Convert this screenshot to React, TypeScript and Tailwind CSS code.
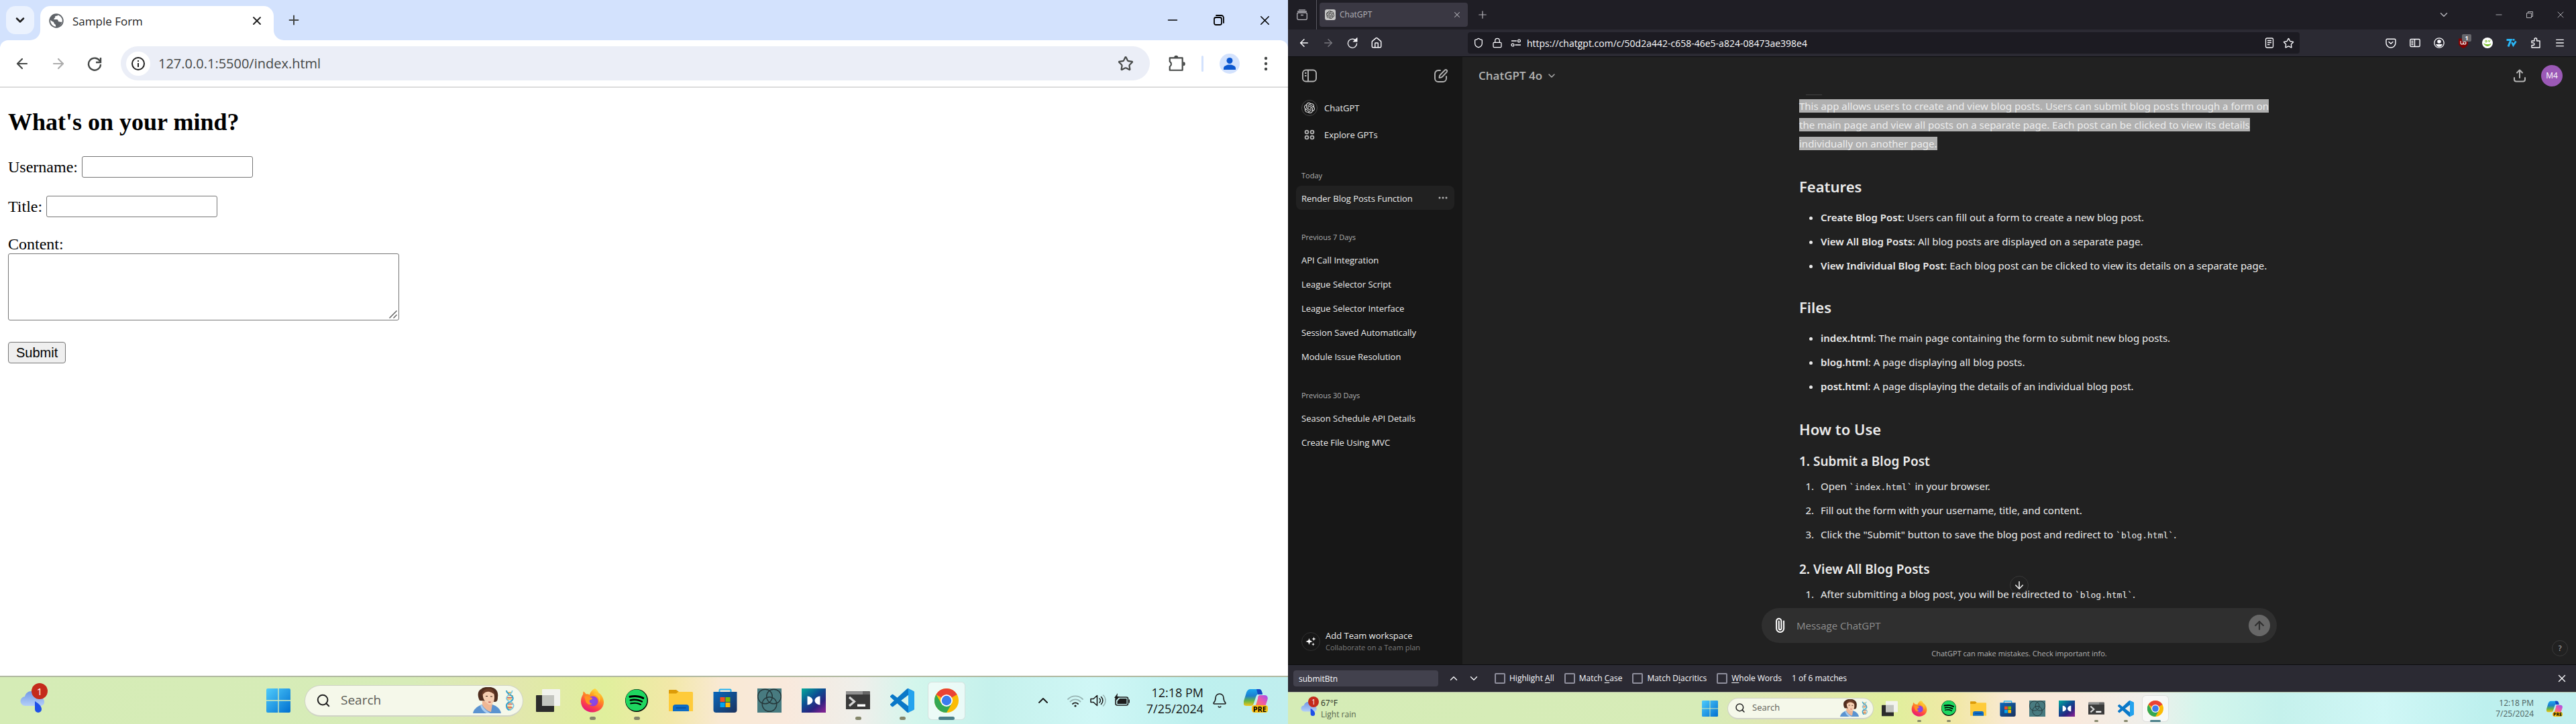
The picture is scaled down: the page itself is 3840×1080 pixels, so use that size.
import React from "react";
import { SiOpenai } from "react-icons/si";
import { FaSpotify } from "react-icons/fa";
import {
  ArrowDown,
  ArrowLeft,
  ArrowRight,
  ArrowUp,
  Bell,
  ChevronDown,
  ChevronUp,
  House,
  Lock,
  Menu,
  Minus,
  Paperclip,
  Plus,
  Search,
  Shield,
  Star,
  X,
} from "lucide-react";

type Kids = { children?: React.ReactNode };

function Btn({ label, className = "", children }: Kids & { label: string; className?: string }) {
  return (
    <button type="button" aria-label={label} className={`flex shrink-0 items-center justify-center ${className}`}>
      {children}
    </button>
  );
}

/* ---------- taskbar artwork ---------- */

function WindowsLogo({ id }: { id: string }) {
  return (
    <svg viewBox="0 0 36 36" className="size-full">
      <defs>
        <linearGradient id={`win${id}`} x1="0" y1="0" x2="1" y2="1">
          <stop offset="0" stopColor="#4fcbfb" />
          <stop offset="1" stopColor="#0070d0" />
        </linearGradient>
      </defs>
      <path
        d="M2 0h15.3v17.3H0V2a2 2 0 0 1 2-2zM18.7 0H34a2 2 0 0 1 2 2v15.3H18.7zM0 18.7h17.3V36H2a2 2 0 0 1-2-2zM18.7 18.7H36V34a2 2 0 0 1-2 2H18.7z"
        fill={`url(#win${id})`}
      />
    </svg>
  );
}

function TaskView() {
  return (
    <svg viewBox="0 0 36 36" className="size-full">
      <rect x="0" y="10" width="27" height="25" rx="1" fill="#2c2c2c" />
      <rect x="9" y="1" width="27" height="25" rx="1" fill="#f3f3f3" fillOpacity=".93" />
      <rect x="9" y="10" width="18" height="16" fill="#c3c5bf" />
    </svg>
  );
}

function Firefox({ id }: { id: string }) {
  return (
    <svg viewBox="0 0 36 36" className="size-full">
      <defs>
        <linearGradient id={`fx${id}`} x1=".8" y1="0" x2=".3" y2="1">
          <stop offset="0" stopColor="#fff04a" />
          <stop offset=".35" stopColor="#ff9a1f" />
          <stop offset=".7" stopColor="#ff4545" />
          <stop offset="1" stopColor="#e3127e" />
        </linearGradient>
        <radialGradient id={`fxp${id}`}>
          <stop offset="0" stopColor="#7a52f0" />
          <stop offset="1" stopColor="#9a3ad4" />
        </radialGradient>
      </defs>
      <path
        d="M22 0c3 2 4.500 4 5.500 6.500C31 8.500 35 14 35 20.500 35 29 27.500 35.500 18 35.500S1 28.500 1 19.500c0-5 1.500-8 3-10.500l.5-4.500c1.500.5 3 2 4 4 2-.5 4 0 5.500 1 1-4.500 4-8 8-9.500z"
        fill={`url(#fx${id})`}
      />
      <circle cx="19" cy="19" r="7.500" fill={`url(#fxp${id})`} />
      <path d="M6 12c3-1.500 6-.5 9 1.500 2 0 3 .5 3 1.500-1 1.500-3 2-4 2.500-1 3 1 5 4 5.500-4 2.500-9 0-10-4z" fill="#ff9320" />
      <path d="M20 9c6 1 9 6 8 12 3-5 2-12-3-14-2-1-4 0-5 2z" fill="#ffc22e" />
    </svg>
  );
}

function Spotify() {
  return (
    <span className="flex size-full items-center justify-center">
      <span className="flex size-[92%] rounded-full bg-black">
        <FaSpotify className="size-full text-[#1ed760]" />
      </span>
    </span>
  );
}

function Explorer() {
  return (
    <svg viewBox="0 0 36 36" className="size-full">
      <path d="M0 3a1 1 0 0 1 1-1h10l4 3-3 3H0z" fill="#dd9b08" />
      <path d="M0 7.500h11l3-2.500h20.500A1.500 1.500 0 0 1 36 6.500V34H0z" fill="#fecb3a" />
      <path d="M6 34V28a4 4 0 0 1 4-4h16a4 4 0 0 1 4 4v6z" fill="#0d6cc4" />
      <path d="M11 29h14" stroke="#084a94" strokeWidth="1.500" strokeLinecap="round" />
    </svg>
  );
}

function Store({ id }: { id: string }) {
  return (
    <svg viewBox="0 0 36 36" className="size-full">
      <defs>
        <linearGradient id={`st${id}`} x1="0" y1="0" x2="1" y2="1">
          <stop offset="0" stopColor="#0968bd" />
          <stop offset="1" stopColor="#1c315c" />
        </linearGradient>
      </defs>
      <path d="M9.500 7V2.500a1 1 0 0 1 1-1h15a1 1 0 0 1 1 1V7" fill="none" stroke="#22b2f2" strokeWidth="2" />
      <path d="M.5 5H35.500V32a4 4 0 0 1-4 4H4.500a4 4 0 0 1-4-4z" fill={`url(#st${id})`} />
      <path d="M10.500 13h7v7h-7z" fill="#f25022" />
      <path d="M18.500 13h7v7h-7z" fill="#7fba00" />
      <path d="M10.500 21h7v7h-7z" fill="#00a4ef" />
      <path d="M18.500 21h7v7h-7z" fill="#ffb900" />
    </svg>
  );
}

function Rings() {
  return (
    <svg viewBox="0 0 36 36" className="size-full">
      <path d="M0 0h36v36H0z" fill="#487b80" />
      <g fill="none" stroke="#26383b" strokeWidth="1.400">
        <circle cx="11.500" cy="12" r="10.800" />
        <circle cx="24.500" cy="12" r="10.800" />
        <circle cx="18" cy="23.500" r="10.800" />
      </g>
    </svg>
  );
}

function Wing({ id }: { id: string }) {
  return (
    <svg viewBox="0 0 36 36" className="size-full">
      <defs>
        <linearGradient id={`wg${id}`} x1="0" y1="0" x2=".8" y2="1">
          <stop offset="0" stopColor="#05ab9b" />
          <stop offset=".45" stopColor="#0c4f92" />
          <stop offset=".75" stopColor="#2c2380" />
          <stop offset="1" stopColor="#7a2390" />
        </linearGradient>
      </defs>
      <path d="M0 0h36v36H0z" fill={`url(#wg${id})`} />
      <path d="M8.500 11.500c4 0 8 3 8 6.500s-4 6.500-8 6.500zM27.500 11.500c-4 0-8 3-8 6.500s4 6.500 8 6.500z" fill="#fff" />
    </svg>
  );
}

function Terminal() {
  return (
    <svg viewBox="0 0 36 36" className="size-full">
      <path d="M0 5.500A1.500 1.500 0 0 1 1.500 4h33A1.500 1.500 0 0 1 36 5.500V31H0z" fill="#3a3a3a" />
      <path d="M0 5.500A1.500 1.500 0 0 1 1.500 4H25v5H0z" fill="#8f8f8f" />
      <path d="M25 4h9.500A1.500 1.500 0 0 1 36 5.500V9H25z" fill="#666" />
      <path d="M5 13l7.500 6.500L5 26" fill="none" stroke="#d6d6d6" strokeWidth="3.200" />
      <path d="M17 23.500h12v3.500H17z" fill="#fff" />
    </svg>
  );
}

function VsCode() {
  return (
    <svg viewBox="0 0 24 24" className="size-full">
      <path
        d="M23.150 2.587 18.210.21a1.494 1.494 0 0 0-1.705.29l-9.460 8.630-4.120-3.128a1 1 0 0 0-1.276.057L.327 7.261A1 1 0 0 0 .326 8.740L3.899 12 .326 15.260a1 1 0 0 0 .001 1.479L1.650 17.940a1 1 0 0 0 1.276.057l4.120-3.128 9.460 8.630a1.492 1.492 0 0 0 1.704.29l4.942-2.377A1.500 1.500 0 0 0 24 20.060V3.939a1.500 1.500 0 0 0-.85-1.352zm-5.146 14.861L10.826 12l7.178-5.448z"
        fill="#0a78c8"
      />
      <path d="M18 .1l5.200 2.500a1.500 1.500 0 0 1 .8 1.340V20.060a1.500 1.500 0 0 1-.8 1.300L18 23.900z" fill="#24a3ee" />
    </svg>
  );
}

function Chrome() {
  return (
    <svg viewBox="0 0 36 36" className="size-full">
      <circle cx="18" cy="18" r="18" fill="#fbbc04" />
      <path d="M18 18 2.400 9a18 18 0 0 1 31.200 0z" fill="#ea4335" />
      <path d="M10.200 22.500 2.400 9A18 18 0 0 0 18 36l7.800-13.500z" fill="#34a853" />
      <circle cx="18" cy="18" r="9" fill="#fff" />
      <circle cx="18" cy="18" r="7.200" fill="#3b7ced" />
    </svg>
  );
}

function Portrait() {
  return (
    <svg viewBox="0 0 42 39" className="h-full w-auto">
      <path d="M10 20C7 15 6 6 12 3 16-1 26-1 30 1c6 2 8 8 7 14 0 4-1 7-4 7z" fill="#4f2d1e" />
      <path d="M0 39c1-6 6-10 13-13h16c7 2 12 7 13 13z" fill="#5b93d0" />
      <path d="M14 20v7c3 5 8 9 13 10l2-12z" fill="#efb795" />
      <path d="M13 26c3 6 8 10 13 13h-6c-5-3-8-7-9-12z" fill="#a9cdf0" />
      <path d="M15 9c3-4 12-4 16 0 2 6 1 13-3 17-3 1-5 0-7-2-5-4-7-9-6-15z" fill="#f5cdb0" />
      <path d="M13 13c0-8 6-11 11-11s8 4 9 10c-3-3-8-6-12-5-3 0-5 3-8 6z" fill="#6b3d28" />
      <path d="M19 13.500h3M26 14h3" stroke="#40281d" strokeWidth="1.200" />
      <path d="M23 22c1.500 .6 2.500.6 3.500 0" stroke="#b63e3e" strokeWidth="1.200" fill="none" />
    </svg>
  );
}

function Dna() {
  return (
    <svg viewBox="0 0 14 32" className="h-full w-auto" fill="none">
      <path d="M3 4h7M4 9h8M2 14h8M3 20h9M2 25h8M4 29h7" stroke="#e8a53a" strokeWidth="1.500" />
      <path d="M4 7h5M3 12h9M4 22h9M3 27h8" stroke="#d3473c" strokeWidth="1.200" />
      <path d="M2 1c0 6 10 6 10 12S2 18 2 24s4 7 6 8" stroke="#3aa6d0" strokeWidth="2.200" />
      <path d="M11 1c0 6-9 7-9 12s11 6 11 11-5 6-7 8" stroke="#7cc9e2" strokeWidth="1.800" />
    </svg>
  );
}

function Copilot({ id }: { id: string }) {
  return (
    <svg viewBox="0 0 36 36" className="size-full">
      <defs>
        <linearGradient id={`cp${id}`} x1="0" y1="0" x2="0" y2="1">
          <stop offset="0" stopColor="#1aa5ef" />
          <stop offset=".4" stopColor="#1d7fd0" />
          <stop offset=".7" stopColor="#65b544" />
          <stop offset="1" stopColor="#f5c518" />
        </linearGradient>
        <linearGradient id={`cq${id}`} x1="1" y1="0" x2="0" y2="1">
          <stop offset="0" stopColor="#a04bf2" />
          <stop offset=".5" stopColor="#ee5aa5" />
          <stop offset="1" stopColor="#ff8a3c" />
        </linearGradient>
      </defs>
      <path d="M10 1h13c3 0 4 3 5 7h-5c-3 0-4 2-5 5l-3 9c-1 3-2 4-5 4H4c-4 0-5-3-4-7L4 6c1-3 3-5 6-5z" fill={`url(#cp${id})`} />
      <path d="M19 1h4c3 0 4 3 5 8h-7z" fill="#1546c4" />
      <path d="M24 10h7c4 0 6 3 4 8l-3 9H16c1 0 2-2 3-5l2-7c0-3 1-5 3-5z" fill={`url(#cq${id})`} />
    </svg>
  );
}

function Cloud({ id }: { id: string }) {
  return (
    <svg viewBox="0 0 36 32" className="size-full">
      <defs>
        <linearGradient id={`cl${id}`} x1="0" y1="0" x2="0" y2="1">
          <stop offset="0" stopColor="#7399e6" />
          <stop offset="1" stopColor="#b3cff8" />
        </linearGradient>
      </defs>
      <path d="M8 22a7 7 0 0 1-1-14C8 3 12 0 17 0c7 0 11 5 11 9 5 0 8 3 8 7s-3 6-7 6z" fill={`url(#cl${id})`} />
      <path d="M22 15c5 3 10 7 10 12a5 5 0 0 1-10 0z" fill="#1e50e8" />
    </svg>
  );
}

function TaskIcon({ big, dot, active, label, children }: Kids & { big: boolean; dot?: boolean; active?: boolean; label: string }) {
  return (
    <button
      type="button"
      aria-label={label}
      className={`relative flex shrink-0 items-center justify-center ${big ? "h-[57px] w-[66px]" : "h-10 w-11"}`}
    >
      {active && (
        <span
          className={`absolute inset-y-0 rounded-md border border-black/10 bg-white/60 ${big ? "inset-x-[5px]" : "inset-x-0.5"}`}
        />
      )}
      <span className={`relative flex items-center justify-center ${big ? "size-9" : "size-6"}`}>{children}</span>
      {dot && (
        <span className={`absolute bottom-0 rounded-full bg-[#84866a] ${big ? "h-[5px] w-[9px]" : "h-[3px] w-1.5"}`} />
      )}
      {active && (
        <span className={`absolute bottom-0 rounded-full bg-[#4a7f88] ${big ? "h-[5px] w-6" : "h-[3px] w-4"}`} />
      )}
    </button>
  );
}

function Taskbar({ big, id }: { big: boolean; id: string }) {
  return (
    <footer
      className={`flex shrink-0 items-center border-[#b0b8a0] bg-[linear-gradient(90deg,#d5ecb6_0%,#d7ecb8_32%,#e2e6b0_39%,#e0ef9c_47%,#f2e8a8_52%,#f9e9d4_56%,#f9e9dc_61%,#eeefeb_67%,#d3f6ec_71%,#c5f1ec_77%,#d0f7f6_85%,#bdf0ee_93%,#c0eeee_100%)] font-['Open_Sans',sans-serif] ${
        big ? "h-[72px] border-t-2" : "h-12 border-t"
      }`}
    >
      <div className={`flex shrink-0 items-center ${big ? "w-[382px] pl-[30px]" : "w-[607px] gap-1.5 pl-[19px]"}`}>
        <span className={`relative ${big ? "mt-1 h-8 w-9" : "mt-0.5 h-[21px] w-6"}`}>
          <Cloud id={id} />
          <span
            className={`absolute flex items-center justify-center rounded-full bg-[#c42b1c] text-white ${
              big ? "-top-3 left-[17px] size-6 text-[15px]" : "-top-2 left-[11px] size-4 text-[10px]"
            }`}
          >
            1
          </span>
        </span>
        {!big && (
          <span className="flex flex-col text-[12px] leading-[17px]">
            <span className="text-[#1f2a1c]">67°F</span>
            <span className="text-[#56644c]">Light rain</span>
          </span>
        )}
      </div>
      <TaskIcon big={big} label="Start">
        <WindowsLogo id={id} />
      </TaskIcon>
      <div
        className={`flex shrink-0 items-center rounded-full border border-b-2 border-black/15 bg-[#f5f8ea] ${
          big ? "mr-1 ml-1.5 h-[47px] w-[326px] pr-3 pl-4" : "mr-0.5 ml-1 h-8 w-[218px] pr-2 pl-2.5"
        }`}
      >
        <Search strokeWidth={2.2} className={`shrink-0 text-[#222] ${big ? "size-[22px]" : "size-4"}`} />
        <input
          type="text"
          aria-label="Search"
          placeholder="Search"
          className={`min-w-0 flex-1 bg-transparent text-[#555] outline-none placeholder:text-[#5c5c56] ${
            big ? "ml-[15px] text-[19px]" : "ml-2.5 text-[13px]"
          }`}
        />
        <span className={`flex items-center ${big ? "h-[39px] gap-1.5" : "h-[26px] gap-1"}`}>
          <Portrait />
          <span className="flex h-4/5">
            <Dna />
          </span>
        </span>
      </div>
      <TaskIcon big={big} label="Task view">
        <TaskView />
      </TaskIcon>
      <TaskIcon big={big} label="Firefox" dot>
        <Firefox id={id} />
      </TaskIcon>
      <TaskIcon big={big} label="Spotify" dot>
        <Spotify />
      </TaskIcon>
      <TaskIcon big={big} label="File Explorer">
        <Explorer />
      </TaskIcon>
      <TaskIcon big={big} label="Store">
        <Store id={id} />
      </TaskIcon>
      <TaskIcon big={big} label="Rings">
        <Rings />
      </TaskIcon>
      <TaskIcon big={big} label="Media">
        <Wing id={id} />
      </TaskIcon>
      <TaskIcon big={big} label="Terminal" dot>
        <Terminal />
      </TaskIcon>
      <TaskIcon big={big} label="Visual Studio Code" dot>
        <VsCode />
      </TaskIcon>
      <TaskIcon big={big} label="Chrome" active>
        <Chrome />
      </TaskIcon>

      <div className={`ml-auto flex items-center ${big ? "pr-[30px]" : "pr-5"}`}>
        {big && (
          <>
            <Btn label="Show hidden icons" className="mr-6">
              <ChevronUp className="size-6 text-[#1c1c1c]" />
            </Btn>
            <svg viewBox="0 0 24 24" className="mr-2.5 size-6" fill="none" strokeWidth="1.800" strokeLinecap="round">
              <path d="M1 10a15.500 15.500 0 0 1 22 0M4.500 13.500a10.500 10.500 0 0 1 15 0" stroke="#98b5b4" />
              <path d="M8 17a5.600 5.600 0 0 1 8 0" stroke="#1c1c1c" />
              <circle cx="12" cy="20" r="1.600" fill="#1c1c1c" />
            </svg>
            <svg viewBox="0 0 24 24" className="mr-3 size-6" fill="none" stroke="#1c1c1c" strokeWidth="1.600" strokeLinejoin="round" strokeLinecap="round">
              <path d="M1 9.500h4l5.500-5v15L5 14.500H1z" />
              <path d="M14 9a4 4 0 0 1 0 6M16.500 6.500a7.500 7.500 0 0 1 0 11" />
              <path d="M19.500 4a11 11 0 0 1 0 16" stroke="#98b5b4" />
            </svg>
            <svg viewBox="0 0 24 24" className="mr-6 size-6" fill="#1c1c1c">
              <rect x="2" y="7" width="18.500" height="12" rx="2.500" fill="none" stroke="#1c1c1c" strokeWidth="1.600" />
              <path d="M8 9h10.500v8h-14v-4zM21.500 10.500h1.500v5h-1.500zM5 1 0 8h3L2 13l6-7H4.500z" />
            </svg>
          </>
        )}
        <time
          className={`flex flex-col text-right ${
            big ? "text-[18px] leading-6 text-[#161616]" : "mr-[19px] text-[12px] leading-4 text-[#4d5f60]"
          }`}
        >
          <span>12:18 PM</span>
          <span>7/25/2024</span>
        </time>
        {big && (
          <Btn label="Notifications" className="mr-6 ml-3">
            <Bell strokeWidth={1.6} className="size-6 text-[#1c1c1c]" />
          </Btn>
        )}
        <Btn label="Copilot" className={`relative ${big ? "size-9" : "size-6"}`}>
          <Copilot id={id} />
          <span
            className={`absolute right-0 bottom-0 rounded-sm bg-[#fdc212] font-bold text-black ${
              big ? "px-0.5 text-[11px] leading-[11px]" : "px-px text-[7px] leading-[7px]"
            }`}
          >
            PRE
          </span>
        </Btn>
      </div>
    </footer>
  );
}

/* ---------- left screen: Chrome ---------- */

function ChromeWindow() {
  return (
    <section className="flex min-h-0 flex-1 flex-col bg-[#d3e2fd] font-['Open_Sans',sans-serif] text-[#1f1f1f]">
      <div className="flex h-[60px] shrink-0 items-end">
        <div className="flex w-[60px] items-center self-stretch pl-[9px]">
          <Btn label="Search tabs" className="size-[42px] rounded-[14px] bg-[#ebf2fe]">
            <ChevronDown strokeWidth={3} className="size-5" />
          </Btn>
        </div>
        <div className="relative flex h-[51px] w-[348px] items-center rounded-t-[15px] bg-white px-[13px]">
          <svg viewBox="0 0 15 15" className="absolute bottom-0 -left-[15px] size-[15px]">
            <path d="M15 0v15H0A15 15 0 0 0 15 0z" fill="#fff" />
          </svg>
          <svg viewBox="0 0 15 15" className="absolute -right-[15px] bottom-0 size-[15px]">
            <path d="M0 0v15h15A15 15 0 0 1 0 0z" fill="#fff" />
          </svg>
          <svg viewBox="0 0 24 24" className="mb-2 size-[22px] shrink-0">
            <circle cx="12" cy="12" r="10.700" fill="#fff" stroke="#5f6368" strokeWidth="2" />
            <path d="M1.500 10C2 5 6 1.200 12 1.200l3 .4c-.4 2-2 2.600-4 2.600-.6 0-1 .8-1 2 0 1.300-2 1.500-2 3 0 1 3 .5 5 .5 1 0 2 1 2 2.500 0 1.300 2 1 3 1.500.8.600 2 .5 3 0C20 19 16 22.500 12 22.500c-1-.5-1-1.500-1-3 0-2-3-2-3-4.500 0-1.500-2-1.500-3.500-2.500z" fill="#5f6368" />
          </svg>
          <span className="mb-1.5 ml-[13px] flex-1 text-[17px]">Sample Form</span>
          <Btn label="Close tab" className="mb-2 size-6">
            <X strokeWidth={2.2} className="size-5" />
          </Btn>
        </div>
        <Btn label="New tab" className="mb-[15px] ml-[15px] size-[30px]">
          <Plus strokeWidth={2.2} className="size-[22px] text-[#444746]" />
        </Btn>
        <div className="ml-auto flex h-full text-black">
          <Btn label="Minimize" className="w-[69px]">
            <Minus strokeWidth={1.8} className="size-[22px]" />
          </Btn>
          <Btn label="Restore" className="w-[69px]">
            <svg viewBox="0 0 16 16" className="size-4" fill="none" stroke="currentColor" strokeWidth="1.800">
              <rect x="1" y="4" width="11" height="11" rx="2.500" />
              <path d="M4 1h7.500A3.500 3.500 0 0 1 15 4.500V12" strokeLinecap="round" />
            </svg>
          </Btn>
          <Btn label="Close" className="w-[69px]">
            <X strokeWidth={1.6} className="size-[23px]" />
          </Btn>
        </div>
      </div>
      <div className="flex h-[71px] shrink-0 items-center rounded-t-xl border-b-2 border-[#dcdcdc] bg-white px-1.5 text-[#444746]">
        <Btn label="Back" className="w-[54px]">
          <ArrowLeft strokeWidth={2.2} className="size-6" />
        </Btn>
        <Btn label="Forward" className="w-[54px] text-[#acacac]">
          <ArrowRight strokeWidth={2.2} className="size-6" />
        </Btn>
        <Btn label="Reload" className="w-[54px]">
          <svg viewBox="0 0 24 24" className="size-6" fill="none" stroke="currentColor" strokeWidth="2.400">
            <path d="M20 8.500A9 9 0 1 0 21 13" />
            <path d="M21 3v7h-7" />
          </svg>
        </Btn>
        <div className="ml-3 flex h-[51px] flex-1 items-center rounded-full bg-[#ebeef7] pr-6 pl-2">
          <Btn label="View site information" className="size-9 rounded-full bg-white">
            <svg viewBox="0 0 24 24" className="size-6" fill="none" stroke="#1f1f1f" strokeWidth="2">
              <circle cx="12" cy="12" r="9" />
              <path d="M12 11v6M12 7v2" />
            </svg>
          </Btn>
          <input
            type="text"
            aria-label="Address"
            defaultValue="127.0.0.1:5500/index.html"
            className="ml-3 min-w-0 flex-1 bg-transparent text-xl text-[#444746] outline-none"
          />
          <Btn label="Bookmark">
            <Star strokeWidth={2.2} className="size-6" />
          </Btn>
        </div>
        <Btn label="Extensions" className="mr-2.5 ml-[13px] w-[54px]">
          <svg viewBox="0 0 24 24" className="size-[26px]" fill="currentColor">
            <path
              d="M4 4h16v17H2.500v-5a4 4 0 0 0 0-7V4z"
              fill="none"
              stroke="currentColor"
              strokeWidth="2"
              strokeLinejoin="round"
            />
            <path d="M8.500 3.500a2.800 2.800 0 0 1 5.600 0zM21 9.500a2.800 2.800 0 0 1 0 5.600z" />
          </svg>
        </Btn>
        <span className="h-6 w-[3px] rounded bg-[#d3e2fd]" />
        <Btn label="Profile" className="ml-3 w-[54px]">
          <span className="flex size-[30px] items-center justify-center rounded-full bg-[#d3e2fd]">
            <svg viewBox="0 0 18 18" className="size-[18px]" fill="#0b57d0">
              <circle cx="9" cy="4.500" r="4.500" />
              <path d="M0 18v-2.500c0-3 5-5 9-5s9 2 9 5V18z" />
            </svg>
          </span>
        </Btn>
        <Btn label="Menu" className="w-[54px]">
          <svg viewBox="0 0 6 24" className="h-6 w-1.5" fill="currentColor">
            <circle cx="3" cy="4" r="2.200" />
            <circle cx="3" cy="12" r="2.200" />
            <circle cx="3" cy="20" r="2.200" />
          </svg>
        </Btn>
      </div>
      <main className="flex-1 bg-white px-3 pt-[31px] font-['Liberation_Serif',serif] text-2xl leading-[27px] text-black">
        <h2 className="text-4xl leading-[41px] font-bold">What's on your mind?</h2>
        <form className="mt-[30px] flex flex-col items-start" onSubmit={(e) => e.preventDefault()}>
          <div className="mb-[27px] flex h-8 items-center gap-1.5">
            <label htmlFor="username">Username:</label>
            <input id="username" type="text" className="h-8 w-[255px] rounded-[3px] border border-[#767676] px-1 text-xl" />
          </div>
          <div className="mb-[27px] flex h-8 items-center gap-1.5">
            <label htmlFor="title">Title:</label>
            <input id="title" type="text" className="h-8 w-[255px] rounded-[3px] border border-[#767676] px-1 text-xl" />
          </div>
          <label htmlFor="content">Content:</label>
          <div className="relative flex">
            <textarea
              id="content"
              className="h-[100px] w-[583px] resize-none rounded-[3px] border border-[#767676] px-1 text-xl"
            />
            <svg viewBox="0 0 12 12" className="absolute right-[3px] bottom-[3px] size-3" stroke="#555" strokeWidth="1.400">
              <path d="M.5 11.500 11.500 .5M6.500 11.500l5-5" />
            </svg>
          </div>
          <button
            type="submit"
            className="mt-8 h-8 rounded-[4px] border border-[#767676] bg-[#efefef] px-[11px] font-['Liberation_Sans',sans-serif] text-xl leading-7"
          >
            Submit
          </button>
        </form>
      </main>
    </section>
  );
}

/* ---------- right screen: Firefox with ChatGPT ---------- */

function FirefoxChrome() {
  return (
    <div className="shrink-0 text-[#fbfbfe]">
      <div className="flex h-11 items-center bg-[#1f1e25] text-[#b5b4ba]">
        <Btn label="Firefox View" className="w-[43px] self-stretch border-r border-[#5a5961]">
          <svg viewBox="0 0 16 16" className="size-4" fill="none" stroke="currentColor" strokeWidth="1.300" strokeLinecap="round">
            <rect x=".7" y="5" width="14.600" height="10.300" rx="2" />
            <path d="M1.500 3h13M3.500 .8h9M6.500 8.500h3" />
          </svg>
        </Btn>
        <div className="ml-1 flex h-9 w-[221px] items-center rounded bg-[#3a3843] px-2">
          <span className="flex size-4 items-center justify-center rounded-[3px] bg-[#c6c6c6]">
            <SiOpenai className="size-3 text-[#2f2f2f]" />
          </span>
          <span className="ml-1.5 flex-1 text-[12px]">ChatGPT</span>
          <Btn label="Close tab" className="size-4">
            <X strokeWidth={1.8} className="size-3.5" />
          </Btn>
        </div>
        <Btn label="New tab" className="ml-1 size-9">
          <Plus strokeWidth={1.6} className="size-[18px]" />
        </Btn>
        <div className="ml-auto flex items-center">
          <Btn label="List all tabs" className="mr-[50px]">
            <ChevronDown strokeWidth={2} className="size-[18px]" />
          </Btn>
          <Btn label="Minimize" className="w-[46px]">
            <Minus strokeWidth={1.6} className="size-3.5" />
          </Btn>
          <Btn label="Restore" className="w-[46px]">
            <svg viewBox="0 0 10 10" className="size-2.5" fill="none" stroke="currentColor">
              <path d="M.5 2.500h7v7h-7zM2.500 2.500v-2h7v7h-2" />
            </svg>
          </Btn>
          <Btn label="Close" className="w-[46px]">
            <X strokeWidth={1.4} className="size-4" />
          </Btn>
        </div>
      </div>
      <div className="flex h-[41px] items-center border-b border-[#0e0e10] bg-[#2b2a33] px-1.5">
        <Btn label="Back" className="w-9">
          <ArrowLeft strokeWidth={2} className="size-[18px]" />
        </Btn>
        <Btn label="Forward" className="w-9 text-[#79787f]">
          <ArrowRight strokeWidth={2} className="size-[18px]" />
        </Btn>
        <Btn label="Reload" className="w-9">
          <svg viewBox="0 0 16 16" className="size-4" fill="none" stroke="currentColor" strokeWidth="1.300">
            <path d="M13.500 5A6.600 6.600 0 1 0 14.600 8.500" />
            <path d="M14.800 1v4.800h-4.800z" fill="currentColor" />
          </svg>
        </Btn>
        <Btn label="Home" className="w-9">
          <House strokeWidth={1.9} className="size-[18px]" />
        </Btn>
        <span className="flex-1" />
        <div className="flex h-8 w-[65%] items-center rounded bg-[#1c1b22] px-2">
          <Shield strokeWidth={1.9} className="size-4 shrink-0" />
          <Lock strokeWidth={1.9} className="ml-3 size-4 shrink-0" />
          <svg viewBox="0 0 16 16" className="ml-3 size-4 shrink-0" fill="none" stroke="currentColor" strokeWidth="1.300">
            <path d="M1 5h8M6.500 11H15" />
            <circle cx="12.500" cy="5" r="1.900" />
            <circle cx="3" cy="11" r="1.900" />
          </svg>
          <input
            type="text"
            aria-label="Address"
            defaultValue="https://chatgpt.com/c/50d2a442-c658-46e5-a824-08473ae398e4"
            className="ml-2 min-w-0 flex-1 bg-transparent text-[14px] outline-none"
          />
          <Btn label="Reader view">
            <svg viewBox="0 0 16 16" className="size-4" fill="none" stroke="currentColor" strokeWidth="1.300">
              <rect x="2.500" y="1" width="11" height="14" rx="1.800" />
              <path d="M5 4.500h6M5 7.500h6M5 10.500h3.500" />
            </svg>
          </Btn>
          <Btn label="Bookmark" className="ml-3">
            <Star strokeWidth={1.9} className="size-[17px]" />
          </Btn>
        </div>
        <span className="flex-1" />
        <Btn label="Pocket" className="w-9">
          <svg viewBox="0 0 16 16" className="size-4" fill="none" stroke="currentColor" strokeWidth="1.400" strokeLinecap="round" strokeLinejoin="round">
            <path d="M2.500 2.200h11a1.500 1.500 0 0 1 1.500 1.500V8A7 7 0 0 1 1 8V3.700a1.500 1.500 0 0 1 1.500-1.500z" />
            <path d="M5 6.500l3 2.800 3-2.800" />
          </svg>
        </Btn>
        <Btn label="Sidebars" className="w-9">
          <svg viewBox="0 0 16 16" className="size-4" fill="none" stroke="currentColor" strokeWidth="1.400">
            <rect x=".8" y="2.500" width="14.400" height="11" rx="1.500" />
            <path d="M7.500 2.500v11M2.500 5.500h3M2.500 8h3M2.500 10.500h3" />
          </svg>
        </Btn>
        <Btn label="Account" className="w-9">
          <svg viewBox="0 0 16 16" className="size-4" fill="currentColor">
            <circle cx="8" cy="8" r="7.200" fill="none" stroke="currentColor" strokeWidth="1.300" />
            <circle cx="8" cy="6" r="2.800" />
            <path d="M3 10h10c-1 3-3 3.800-5 3.800S4 13 3 10z" />
          </svg>
        </Btn>
        <Btn label="uBlock Origin" className="relative w-9">
          <svg viewBox="0 0 16 16" className="size-4">
            <path d="M1 1.500h14V9c0 3-4 5.500-7 7-3-1.500-7-4-7-7z" fill="#800000" />
            <path d="M4 5v3a1.500 1.500 0 0 0 4 0V5M8 5v3a1.500 1.500 0 0 0 4 0c0-1.500-1.500-2-3-1.500" fill="none" stroke="#fff" strokeWidth="1.100" />
          </svg>
          <span className="absolute -top-[5px] right-1.5 h-[11px] w-3.5 rounded-[2px] bg-[#66666b] text-center text-[9px] leading-[11px] font-bold">
            1
          </span>
        </Btn>
        <Btn label="Smiley extension" className="w-9">
          <svg viewBox="0 0 16 16" className="size-4" fill="none" stroke="#7cc02c" strokeWidth="1" strokeLinecap="round">
            <circle cx="8" cy="8" r="8" fill="#fff" stroke="none" />
            <circle cx="6" cy="5.500" r="1.400" />
            <path d="M9.500 4.300l1 2.500 1.500-3" />
            <path d="M3 9.500c2.500 4 7.500 4 10 0-2.500 1.600-7.500 1.600-10 0z" fill="#7cc02c" />
          </svg>
        </Btn>
        <Btn label="7TV" className="w-9">
          <svg viewBox="0 0 16 14" className="h-3.5 w-4" fill="none" stroke="#29b6f6" strokeWidth="3">
            <path d="M.5 2.500H7L3 12.500" />
            <path d="M8.300 6l2.200 4.500L14.500 4.500M9.500 2.300h3" strokeWidth="2.800" />
          </svg>
        </Btn>
        <Btn label="Extensions" className="w-9">
          <svg viewBox="0 0 16 16" className="size-4" fill="none" stroke="currentColor" strokeWidth="1.400" strokeLinejoin="round">
            <path d="M6 5V2.500a1.800 1.800 0 0 1 3.600 0V5H14v10H2v-3.500h2a1.800 1.800 0 0 0 0-3.600H2V5z" />
          </svg>
        </Btn>
        <Btn label="Menu" className="w-9">
          <Menu strokeWidth={2} className="size-4" />
        </Btn>
      </div>
    </div>
  );
}

const history = [
  { title: "Today", items: ["Render Blog Posts Function"] },
  {
    title: "Previous 7 Days",
    items: [
      "API Call Integration",
      "League Selector Script",
      "League Selector Interface",
      "Session Saved Automatically",
      "Module Issue Resolution",
    ],
  },
  { title: "Previous 30 Days", items: ["Season Schedule API Details", "Create File Using MVC"] },
];

function Sidebar() {
  return (
    <nav className="flex w-[260px] shrink-0 flex-col bg-[#171717] px-3 text-[13px] text-[#ececec]">
      <div className="flex h-14 items-center justify-between px-2 text-[#b4b4b4]">
        <Btn label="Close sidebar">
          <svg viewBox="0 0 24 24" className="size-6" fill="none" stroke="currentColor" strokeWidth="1.900">
            <rect x="2" y="3.500" width="20" height="17" rx="4.500" />
            <path d="M10 3.500v17M5 8h2.500M5 12h2.500" />
          </svg>
        </Btn>
        <Btn label="New chat">
          <svg viewBox="0 0 24 24" className="size-6" fill="none" stroke="currentColor" strokeWidth="1.900" strokeLinecap="round" strokeLinejoin="round">
            <path d="M11 4H8a5 5 0 0 0-5 5v7a5 5 0 0 0 5 5h7a5 5 0 0 0 5-5v-3" />
            <path d="M18 3.500a2 2 0 0 1 2.800 2.800L14 13.500c-1 1-2.500 1.500-4.500 1.500 0-2 .5-3.500 1.500-4.500z" />
          </svg>
        </Btn>
      </div>
      <a href="#chatgpt" className="flex h-10 items-center px-2">
        <span className="mr-2.5 flex size-6 items-center justify-center rounded-full border border-[#444]">
          <SiOpenai className="size-4" />
        </span>
        <span className="pt-0.5">ChatGPT</span>
      </a>
      <a href="#explore" className="flex h-10 items-center px-2">
        <svg viewBox="0 0 24 24" className="mr-2.5 size-6" fill="none" stroke="#b4b4b4" strokeWidth="1.800">
          <circle cx="8" cy="8" r="2.400" />
          <circle cx="16" cy="8" r="2.400" />
          <circle cx="8" cy="16" r="2.400" />
          <circle cx="16" cy="16" r="2.400" />
        </svg>
        <span className="pt-0.5">Explore GPTs</span>
      </a>
      {history.map((group) => (
        <section key={group.title} className="mt-[26px]">
          <h3 className="px-2 text-[11px] leading-[30px] font-medium text-[#b0b0b0]">{group.title}</h3>
          {group.items.map((item) => (
            <a
              key={item}
              href="#conversation"
              className={`flex h-9 items-center justify-between rounded-lg px-2 pt-1 ${
                group.title === "Today" ? "bg-[#212121]" : ""
              }`}
            >
              {item}
              {group.title === "Today" && (
                <svg viewBox="0 0 16 4" className="mr-px mb-1 h-1 w-4" fill="#b4b4b4">
                  <circle cx="3" cy="2" r="1.500" />
                  <circle cx="8" cy="2" r="1.500" />
                  <circle cx="13" cy="2" r="1.500" />
                </svg>
              )}
            </a>
          ))}
        </section>
      ))}
      <a href="#team" className="mt-auto mb-[17px] flex items-center gap-2 px-2">
        <span className="flex size-7 items-center justify-center rounded-full border border-[#303030]">
          <svg viewBox="0 0 16 16" className="size-4" fill="#fff">
            <path d="M5.500 3l1.200 3.300L10.500 8 6.700 9.200 5.500 13 4.300 9.200.5 8l3.800-1.700zM12.500 1l.7 2.300 2.300.7-2.300.9-.7 2.300-.7-2.300L9.500 4l2.300-.7zM11.500 9.500l.6 1.900 1.900.6-1.900.7-.6 1.900-.6-1.900L9 12l1.900-.6z" />
          </svg>
        </span>
        <span className="flex flex-col">
          <span className="leading-[19px]">Add Team workspace</span>
          <span className="text-[11px] leading-4 text-[#7d7d7d]">Collaborate on a Team plan</span>
        </span>
      </a>
    </nav>
  );
}

const Code = ({ children }: Kids) => (
  <code className="font-['DejaVu_Sans_Mono',monospace] text-[13px] leading-none font-medium">
    {"`"}
    {children}
    {"`"}
  </code>
);

function Bullets({ items }: { items: [string, string][] }) {
  return (
    <ul className="flex list-disc flex-col gap-2 pl-8 marker:text-[#ececec]">
      {items.map(([name, text]) => (
        <li key={name}>
          <strong className="font-semibold">{name}</strong>: {text}
        </li>
      ))}
    </ul>
  );
}

function Chat() {
  return (
    <main className="relative flex min-w-0 flex-1 flex-col bg-[#212121] text-[#ececec]">
      <header className="flex h-14 shrink-0 items-center justify-between pr-5 pl-6 text-[#b4b4b4]">
        <button type="button" className="flex items-center gap-1.5 text-[17px] font-semibold">
          ChatGPT 4o <ChevronDown strokeWidth={2} className="size-4" />
        </button>
        <div className="flex items-center gap-5">
          <Btn label="Share">
            <svg viewBox="0 0 24 24" className="size-6" fill="none" stroke="currentColor" strokeWidth="2" strokeLinecap="round" strokeLinejoin="round">
              <path d="M12 15V4M8 7.500l4-4 4 4M4 15v2.500A3 3 0 0 0 7 20.500h10a3 3 0 0 0 3-3V15" />
            </svg>
          </Btn>
          <button type="button" className="size-8 rounded-full bg-[#9b59b6] text-[12px] text-white">
            M4
          </button>
        </div>
      </header>
      <div className="relative min-h-0 flex-1 overflow-hidden">
        <article className="mx-auto flex max-w-[768px] flex-col pr-2 pl-14 font-['Noto_Sans',sans-serif] text-[15px] leading-7">
          <span className="ml-2.5 h-px w-6 bg-[#424242]" />
          <p className="mt-0.5 mb-[34px] whitespace-nowrap">
            <mark className="bg-[#b0b0b0] text-[#ececec]">
              This app allows users to create and view blog posts. Users can submit blog posts through a form on <br />
              the main page and view all posts on a separate page. Each post can be clicked to view its details <br />
              individually on another page.
            </mark>
          </p>
          <h2 className="mb-4 text-[22px] leading-8 font-semibold">Features</h2>
          <Bullets
            items={[
              ["Create Blog Post", "Users can fill out a form to create a new blog post."],
              ["View All Blog Posts", "All blog posts are displayed on a separate page."],
              ["View Individual Blog Post", "Each blog post can be clicked to view its details on a separate page."],
            ]}
          />
          <h2 className="mt-8 mb-4 text-[22px] leading-8 font-semibold">Files</h2>
          <Bullets
            items={[
              ["index.html", "The main page containing the form to submit new blog posts."],
              ["blog.html", "A page displaying all blog posts."],
              ["post.html", "A page displaying the details of an individual blog post."],
            ]}
          />
          <h2 className="mt-[34px] mb-4 text-[22px] leading-8 font-semibold">How to Use</h2>
          <h3 className="mb-[7px] text-[19px] leading-8 font-semibold">1. Submit a Blog Post</h3>
          <ol className="flex list-decimal flex-col gap-2 pl-[26px]">
            <li className="pl-1.5">
              Open <Code>index.html</Code> in your browser.
            </li>
            <li className="pl-1.5">Fill out the form with your username, title, and content.</li>
            <li className="pl-1.5">
              Click the "Submit" button to save the blog post and redirect to <Code>blog.html</Code>.
            </li>
          </ol>
          <h3 className="mt-[22px] mb-[7px] text-[19px] leading-8 font-semibold">2. View All Blog Posts</h3>
          <ol className="list-decimal pl-[26px]">
            <li className="pl-1.5">
              After submitting a blog post, you will be redirected to <Code>blog.html</Code>.
            </li>
          </ol>
        </article>
        <Btn
          label="Scroll to bottom"
          className="absolute bottom-5 left-1/2 -ml-3.5 size-7 rounded-full border border-[#383838]"
        >
          <ArrowDown strokeWidth={2.2} className="size-[18px]" />
        </Btn>
      </div>
      <div className="mx-auto flex h-[52px] w-full max-w-[768px] shrink-0 items-center rounded-full bg-[#2f2f2f] pr-2.5 pl-4">
        <Btn label="Attach files" className="text-white">
          <Paperclip strokeWidth={2.2} className="size-[22px] -rotate-45" />
        </Btn>
        <input
          type="text"
          aria-label="Message ChatGPT"
          placeholder="Message ChatGPT"
          className="ml-3.5 min-w-0 flex-1 bg-transparent text-[15px] outline-none placeholder:text-[#8e8e8e]"
        />
        <Btn label="Send" className="size-8 rounded-full bg-[#676767] text-[#2f2f2f]">
          <ArrowUp strokeWidth={2.6} className="size-5" />
        </Btn>
      </div>
      <p className="shrink-0 text-center text-[11px] leading-8 text-[#b4b4b4]">
        ChatGPT can make mistakes. Check important info.
      </p>
      <button
        type="button"
        className="absolute right-3 bottom-3 size-6 rounded-full border border-[#3a3a3a] text-[11px] text-[#c4c4c4]"
      >
        ?
      </button>
    </main>
  );
}

function FindOption({ before, underlined, after }: { before: string; underlined: string; after: string }) {
  return (
    <label className="flex items-center gap-1.5">
      <input type="checkbox" className="size-4 appearance-none rounded-[2px] border-2 border-[#8f8f9d]" />
      <span>
        {before}
        <u className="underline-offset-2">{underlined}</u>
        {after}
      </span>
    </label>
  );
}

function FindBar() {
  return (
    <div className="flex h-[41px] shrink-0 items-center border-t border-[#0c0c0d] bg-[#2b2a33] pr-3 pl-2 text-[12px] text-[#fbfbfe]">
      <input
        type="text"
        aria-label="Find in page"
        defaultValue="submitBtn"
        className="h-6 w-[216px] rounded bg-[#42414d] px-2 outline-none"
      />
      <Btn label="Previous" className="ml-2 w-[30px]">
        <ChevronUp strokeWidth={1.8} className="size-[18px]" />
      </Btn>
      <Btn label="Next" className="mr-4 w-[30px]">
        <ChevronDown strokeWidth={1.8} className="size-[18px]" />
      </Btn>
      <div className="flex items-center gap-[15px]">
        <FindOption before="Highlight " underlined="A" after="ll" />
        <FindOption before="Match " underlined="C" after="ase" />
        <FindOption before="Match D" underlined="i" after="acritics" />
        <FindOption before="" underlined="W" after="hole Words" />
        <span>1 of 6 matches</span>
      </div>
      <Btn label="Close find bar" className="ml-auto">
        <X strokeWidth={1.8} className="size-[18px]" />
      </Btn>
    </div>
  );
}

export default function App() {
  return (
    <div className="grid h-screen grid-cols-2 overflow-hidden">
      <div className="flex min-h-0 min-w-0 flex-col">
        <ChromeWindow />
        <Taskbar big id="a" />
      </div>
      <div className="flex min-h-0 min-w-0 flex-col font-['Open_Sans',sans-serif]">
        <FirefoxChrome />
        <div className="flex min-h-0 flex-1">
          <Sidebar />
          <Chat />
        </div>
        <FindBar />
        <Taskbar big={false} id="b" />
      </div>
    </div>
  );
}
